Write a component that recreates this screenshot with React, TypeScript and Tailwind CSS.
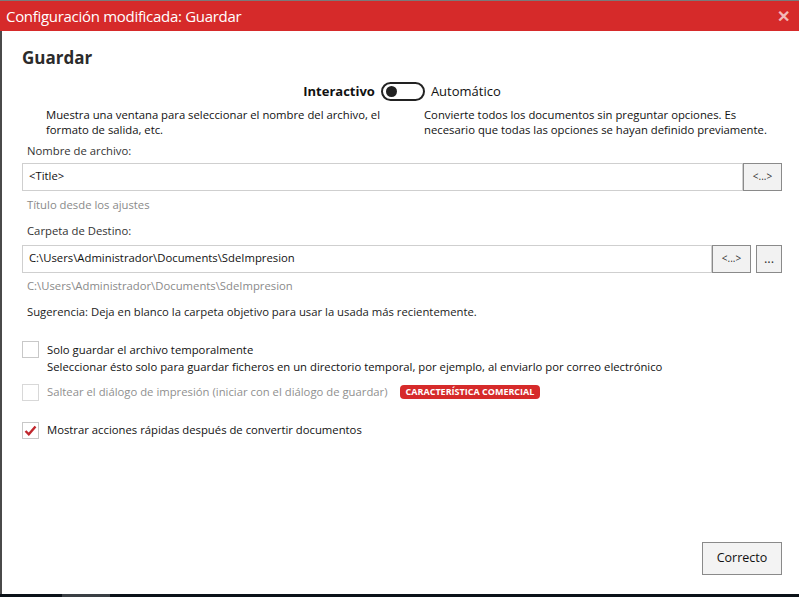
import { useState } from "react";

function Toggle() {
  return (
    <div className="w-[44px] h-[19px] rounded-full border-2 border-[#222] flex items-center px-[3px]">
      <div className="w-[11px] h-[11px] rounded-full bg-[#222]" />
    </div>
  );
}

function Checkbox({ checked, disabled }: { checked?: boolean; disabled?: boolean }) {
  return (
    <div
      className={`w-[17px] h-[17px] border shrink-0 bg-white flex items-center justify-center ${
        disabled ? "border-[#d8d8d8]" : "border-[#c8c8c8]"
      }`}
    >
      {checked && (
        <svg width="13" height="11" viewBox="0 0 13 11">
          <path d="M1.5 6 L4.8 9.3 L11.5 1.5" fill="none" stroke="#c0272d" strokeWidth="2.4" />
        </svg>
      )}
    </div>
  );
}

function SmallButton({ label, className }: { label: string; className?: string }) {
  return (
    <button
      className={`h-[28px] bg-[#f2f2f2] border border-[#8a8a8a] text-[10px] text-[#333] flex items-center justify-center ${className ?? ""}`}
    >
      {label}
    </button>
  );
}

export default function App() {
  const [quick] = useState(true);

  return (
    <div
      className="w-[799px] h-[597px] flex flex-col bg-[#3a3a3a] overflow-hidden text-[#222]"
      style={{ fontFamily: "'Segoe UI', 'Open Sans', 'Noto Sans', sans-serif" }}
    >
      <div className="h-px bg-[#7a7a7a]" />
      <div className="h-[30px] bg-[#d62a2a] flex items-center justify-between pl-[6px] pr-[9px]">
        <span className="text-white text-[15px] tracking-[-0.3px]">Configuración modificada: Guardar</span>
        <span className="text-[#f2b8b8] text-[16px] font-bold leading-none">✕</span>
      </div>
      <div className="flex flex-1 min-h-0">
        <div className="w-[2px] bg-[#4a4a4a]" />
        <div className="flex-1 bg-white flex flex-col pl-[20px] pr-[17px] pt-[15px] pb-[19px] text-[11.3px]">
          <h1 className="text-[17px] font-bold text-[#2b2b2b] leading-[24px]">Guardar</h1>

          <div className="mt-[12px] flex items-center justify-center gap-[6px]">
            <span className="text-[13px] font-bold text-[#111]">Interactivo</span>
            <Toggle />
            <span className="text-[13px] text-[#111]">Automático</span>
          </div>

          <div className="mt-[5px] grid grid-cols-2 leading-[15px] text-[#111]">
            <p className="pl-[24px] pr-[6px]">
              Muestra una ventana para seleccionar el nombre del archivo, el formato de salida, etc.
            </p>
            <p className="pl-[22px]">
              Convierte todos los documentos sin preguntar opciones. Es necesario que todas las opciones se hayan
              definido previamente.
            </p>
          </div>

          <label className="mt-[6px] pl-[5px] text-[#333] leading-[16px]">Nombre de archivo:</label>
          <div className="mt-[4px] flex">
            <div className="flex-1 h-[28px] border border-[#cfcfcf] flex items-center px-[6px] text-[#111]">
              &lt;Title&gt;
            </div>
            <SmallButton label="<...>" className="w-[39px]" />
          </div>
          <p className="mt-[6px] pl-[5px] text-[#8a8a8a] leading-[16px]">Título desde los ajustes</p>

          <label className="mt-[10px] pl-[5px] text-[#333] leading-[16px]">Carpeta de Destino:</label>
          <div className="mt-[6px] flex">
            <div className="flex-1 h-[28px] border border-[#cfcfcf] flex items-center px-[6px] text-[#111]">
              C:\Users\Administrador\Documents\SdeImpresion
            </div>
            <SmallButton label="<...>" className="w-[39px]" />
            <SmallButton label="..." className="w-[26px] ml-[5px] text-[13px]" />
          </div>
          <p className="mt-[5px] pl-[5px] text-[#8a8a8a] leading-[16px]">
            C:\Users\Administrador\Documents\SdeImpresion
          </p>
          <p className="mt-[10px] pl-[5px] text-[#222] leading-[16px]">
            Sugerencia: Deja en blanco la carpeta objetivo para usar la usada más recientemente.
          </p>

          <div className="mt-[21px] flex items-start gap-[8px]">
            <Checkbox />
            <div className="leading-[17px] text-[#111]">
              <p>Solo guardar el archivo temporalmente</p>
              <p>Seleccionar ésto solo para guardar ficheros en un directorio temporal, por ejemplo, al enviarlo por correo electrónico</p>
            </div>
          </div>

          <div className="mt-[9px] flex items-center gap-[8px]">
            <Checkbox disabled />
            <span className="text-[#8f8f8f]">Saltear el diálogo de impresión (iniciar con el diálogo de guardar)</span>
            <span className="ml-[4px] h-[14px] px-[6px] rounded-[4px] bg-[#d62a2a] text-white text-[9px] font-bold flex items-center">
              CARACTERÍSTICA COMERCIAL
            </span>
          </div>

          <div className="mt-[21px] flex items-center gap-[8px]">
            <Checkbox checked={quick} />
            <span className="text-[#111]">Mostrar acciones rápidas después de convertir documentos</span>
          </div>

          <div className="mt-auto flex justify-end">
            <button className="w-[80px] h-[33px] bg-[#f3f3f3] border border-[#8a8a8a] text-[12.5px] text-[#111]">
              Correcto
            </button>
          </div>
        </div>
      </div>
      <div className="h-[3px] bg-[#0b1218] flex">
        <div className="ml-[62px] w-[48px] bg-[#3a3f44]" />
      </div>
    </div>
  );
}
